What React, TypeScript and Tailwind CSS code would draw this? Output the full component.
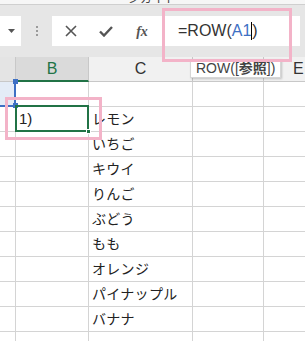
import React from "react";

const rows: string[] = [
  "",
  "レモン",
  "いちご",
  "キウイ",
  "りんご",
  "ぶどう",
  "もも",
  "オレンジ",
  "パイナップル",
  "バナナ",
  "",
];

function Row({ text, idx }: { text: string; idx: number }) {
  return (
    <div className="flex h-[25px] shrink-0">
      <div
        className={
          idx === 0
            ? "w-[16px] shrink-0 border-r border-b border-[#d4d4d4] bg-[#e4ecf7]"
            : "w-[16px] shrink-0 border-r border-b border-[#d4d4d4]"
        }
      />
      <div className="w-[73px] shrink-0 border-r border-b border-[#d4d4d4] flex items-center pl-[3px] text-[15px] text-[#222]">
        {idx === 1 ? "1)" : ""}
      </div>
      <div className="w-[104px] shrink-0 border-r border-b border-[#d4d4d4] flex items-center pl-[3px] text-[14px] tracking-[0.3px] text-[#222]">
        {text}
      </div>
      <div className="w-[71px] shrink-0 border-r border-b border-[#d4d4d4]" />
      <div className="flex-1 border-b border-[#d4d4d4]" />
    </div>
  );
}

export default function App() {
  return (
    <div
      className="relative w-[305px] h-[341px] overflow-hidden bg-white"
      style={{ fontFamily: '"Liberation Sans", "Noto Sans CJK JP", sans-serif' }}
    >
      {/* title strip, cut off */}
      <div className="h-[5px] bg-[#f6f6f6] border-b border-[#cfcfcf] overflow-hidden relative">
        <span className="absolute left-[128px] top-[-10px] text-[12px] text-[#444]">ジカイト</span>
        <span className="absolute left-[283px] top-[-10px] text-[12px] text-[#666]">ー</span>
      </div>

      {/* formula bar */}
      <div className="h-[52px] bg-[#e6e6e6] flex items-start pt-[11px]">
        <div className="w-[21px] h-[30px] bg-white flex items-center justify-end pr-[6px]">
          <svg width="7" height="4" viewBox="0 0 7 4">
            <path d="M0 0 L7 0 L3.5 4 Z" fill="#555" />
          </svg>
        </div>
        <div className="w-[31px] h-[30px] flex items-center justify-center">
          <div className="flex flex-col gap-[2px]">
            <div className="w-[2px] h-[2px] bg-[#9a9a9a]" />
            <div className="w-[2px] h-[2px] bg-[#9a9a9a]" />
            <div className="w-[2px] h-[2px] bg-[#9a9a9a]" />
          </div>
        </div>
        <div className="w-[248px] h-[30px] bg-white flex items-center">
          <div className="w-[36px] flex justify-center pl-[2px]">
            <svg width="12" height="12" viewBox="0 0 12 12">
              <path d="M1 1 L11 11 M11 1 L1 11" stroke="#555" strokeWidth="1.6" />
            </svg>
          </div>
          <div className="w-[36px] flex justify-center">
            <svg width="14" height="11" viewBox="0 0 14 11">
              <path d="M1 5.5 L5 9.5 L13 1" stroke="#555" strokeWidth="2.4" fill="none" />
            </svg>
          </div>
          <div className="w-[36px] flex justify-center">
            <span
              className="italic font-bold text-[14px] text-[#555]"
              style={{ fontFamily: '"Liberation Serif", serif' }}
            >
              fx
            </span>
          </div>
          <div className="ml-[18px] flex items-center text-[16px] text-[#333]">
            <span>=ROW(</span>
            <span className="text-[#3e70c4]">A1</span>
            <span className="w-px h-[18px] bg-black" />
            <span>)</span>
          </div>
        </div>
      </div>

      {/* column headers */}
      <div className="flex h-[25px] bg-[#f1f1f1]">
        <div className="w-[16px] shrink-0 border-r border-b border-[#c8c8c8] bg-[#e4e4e4]" />
        <div className="w-[73px] shrink-0 border-r border-[#c8c8c8] bg-[#dadada] border-b-2 border-b-[#217346] flex items-center justify-center text-[16px] text-[#217346]">
          B
        </div>
        <div className="w-[104px] shrink-0 border-r border-b border-[#c8c8c8] flex items-center justify-center text-[16px] text-[#333]">
          C
        </div>
        <div className="w-[71px] shrink-0 border-r border-b border-[#c8c8c8]" />
        <div className="flex-1 border-b border-[#c8c8c8] flex items-center pl-[29px] text-[16px] text-[#333]">
          E
        </div>
      </div>

      {/* grid */}
      <div className="flex flex-col">
        {rows.map((r, i) => (
          <Row key={i} text={r} idx={i} />
        ))}
      </div>

      {/* A1 reference highlight */}
      <div className="absolute left-[14px] top-[81px] w-[2px] h-[25px] bg-[#3e70c4]" />
      <div className="absolute left-0 top-[105px] w-[16px] h-[2px] bg-[#3e70c4]" />
      <div className="absolute left-[13px] top-[79px] w-[5px] h-[5px] bg-[#3e70c4]" />
      <div className="absolute left-[13px] top-[103px] w-[5px] h-[5px] bg-[#3e70c4]" />

      {/* B2 selection */}
      <div className="absolute left-[15px] top-[105px] w-[74px] h-[27px] border-2 border-[#217346]" />
      <div className="absolute left-[86px] top-[129px] w-[5px] h-[5px] bg-[#217346] border border-white" />

      {/* tooltip */}
      <div className="absolute left-[190px] top-[59px] h-[19px] px-[5px] bg-white border border-[#d6d6d6] shadow-[1px_1px_2px_rgba(0,0,0,0.2)] flex items-center text-[14px] text-[#444]">
        <span>ROW([</span>
        <span className="font-bold">参照</span>
        <span>])</span>
      </div>

      {/* pink annotations */}
      <div className="absolute left-[162px] top-[8px] w-[130px] h-[54px] border-[3px] border-[#f3b3c8]" />
      <div className="absolute left-[5px] top-[97px] w-[97px] h-[43px] border-[3px] border-[#f3b3c8]" />
    </div>
  );
}
